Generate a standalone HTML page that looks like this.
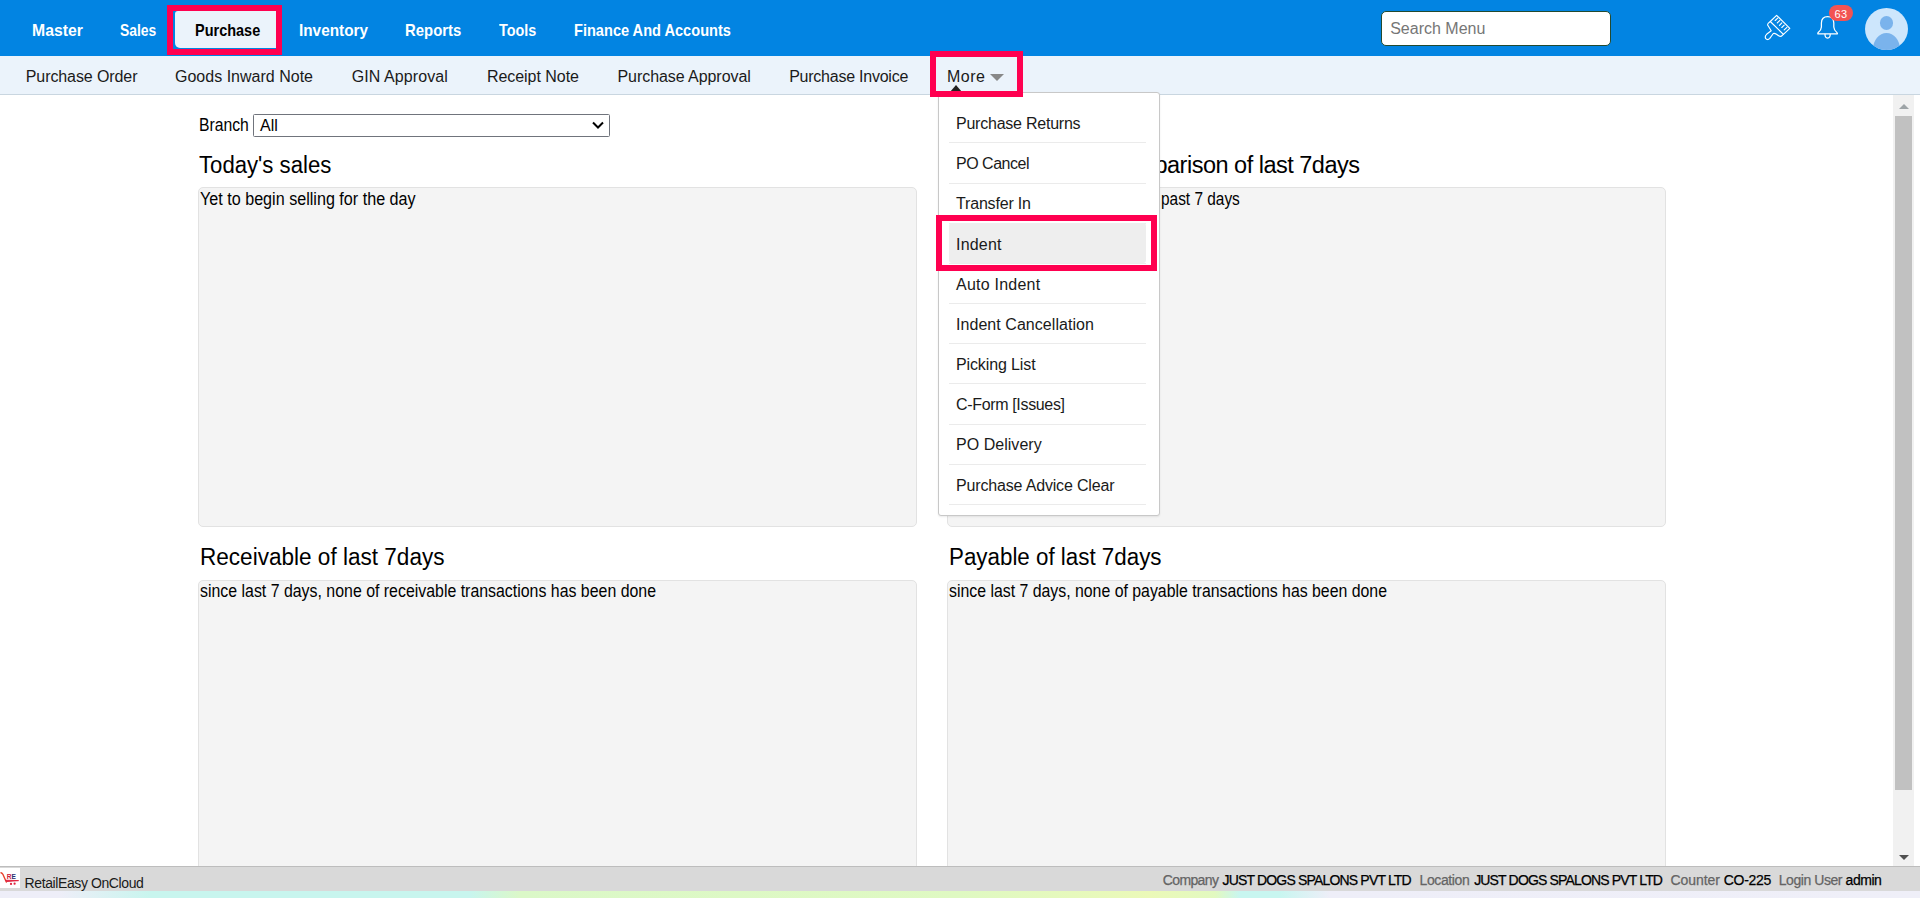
<!DOCTYPE html><html><head><meta charset="utf-8"><style>
*{margin:0;padding:0;box-sizing:border-box}
html,body{width:1920px;height:898px;overflow:hidden;background:#fff;font-family:"Liberation Sans",sans-serif;position:relative}
.t{position:absolute;white-space:nowrap;line-height:1;}
#top{position:absolute;left:0;top:0;width:1920px;height:56px;background:#0284e2}
#tab{position:absolute;left:175px;top:11px;width:107px;height:37px;background:#ebf3fb;border-radius:3px 0 0 5px}
#search{position:absolute;left:1381px;top:11px;width:230px;height:35px;background:#fff;border:1px solid #234a30;border-radius:5px}
#search span{position:absolute;left:8.2px;top:7.8px;font-size:16px;line-height:18px;color:#767676;}
#sub{position:absolute;left:0;top:56px;width:1920px;height:39px;background:#ebf3fb;border-bottom:1px solid #c9d6e0}
#caret{position:absolute;left:990px;top:74px;width:0;height:0;border-left:7px solid transparent;border-right:7px solid transparent;border-top:7px solid #888}
#sel{position:absolute;left:253px;top:114px;width:357px;height:23px;border:1px solid #70747c;border-radius:1.5px;background:#fff}
#chev{position:absolute;left:591px;top:120px}
.box{position:absolute;background:#f4f4f4;border:1px solid #e2e2e2;border-radius:5px}
#dd{position:absolute;left:938px;top:92px;width:222px;height:424px;background:#fff;border:1px solid #c8c8c8;border-radius:3px;box-shadow:0 1px 2px rgba(0,0,0,.08)}
#ddarrow{position:absolute;left:950px;top:85px;width:0;height:0;border-left:6.5px solid transparent;border-right:6.5px solid transparent;border-bottom:7px solid #222}
.sep{position:absolute;left:949px;width:197px;height:1px;background:#ebebeb}
#sel-item{position:absolute;left:949px;top:223px;width:197px;height:40px;background:#eeeeee;border-radius:3px}
.hl{position:absolute;border:6px solid #ff0050}
#track{position:absolute;left:1893px;top:95px;width:21px;height:771px;background:#f1f1f1}
#thumb{position:absolute;left:1895px;top:116px;width:17px;height:674px;background:#c1c1c1}
#up{position:absolute;left:1899px;top:104px;width:0;height:0;border-left:5px solid transparent;border-right:5px solid transparent;border-bottom:5px solid #9ea4a7}
#down{position:absolute;left:1899px;top:855px;width:0;height:0;border-left:5px solid transparent;border-right:5px solid transparent;border-top:5px solid #505050}
#badge{position:absolute;left:1829px;top:5px;width:24px;height:16px;border-radius:8px;background:#f25353;color:#fff;font-size:11px;line-height:11px;text-align:center;letter-spacing:0.4px}
#badge span{position:absolute;left:0;width:24px;top:3.6px}
#avatar{position:absolute;left:1865px;top:8px;width:43px;height:42px;border-radius:50%;background:#cde6fc;overflow:hidden}
#head{position:absolute;left:14.5px;top:8px;width:13.5px;height:13.5px;border-radius:50%;background:#7ab3ec}
#body{position:absolute;left:8px;top:25px;width:27px;height:30px;border-radius:50% 50% 0 0/ 55% 55% 0 0;background:#7ab3ec}
#foot{position:absolute;left:0;top:866px;width:1920px;height:25px;background:#d9d9d9;border-top:1px solid #bdbdbd}
#logo{position:absolute;left:0;top:868px;width:20px;height:20px;background:#fff}
#logo svg{display:block}
#finfo{position:absolute;left:1162px;top:872px;font-size:13px;line-height:15px;white-space:nowrap}
#finfo span{margin-right:5px}
#strip{position:absolute;left:0;top:891px;width:1920px;height:7px;background:linear-gradient(90deg,#eeeef8 0,#eeeef8 60px,#c8f5ee 150px,#c8f5ee 470px,#dbf8c8 520px,#dff9c2 960px,#ebf9b8 1150px,#e2f9c0 1215px,#c8f6f0 1240px,#c8f6f0 1280px,#eeeef8 1330px,#efeff8 1920px)}
</style></head><body>
<div id="top"></div>
<div id="tab"></div>
<div class="t" style="left:31.70px;top:22.00px;font-size:17px;transform:scaleX(0.9269);transform-origin:0 0;color:#fff;font-weight:bold;">Master</div>
<div class="t" style="left:120.40px;top:22.00px;font-size:17px;transform:scaleX(0.8172);transform-origin:0 0;color:#fff;font-weight:bold;">Sales</div>
<div class="t" style="left:298.50px;top:22.00px;font-size:17px;transform:scaleX(0.9018);transform-origin:0 0;color:#fff;font-weight:bold;">Inventory</div>
<div class="t" style="left:405.00px;top:22.00px;font-size:17px;transform:scaleX(0.8758);transform-origin:0 0;color:#fff;font-weight:bold;">Reports</div>
<div class="t" style="left:498.50px;top:22.00px;font-size:17px;transform:scaleX(0.8465);transform-origin:0 0;color:#fff;font-weight:bold;">Tools</div>
<div class="t" style="left:574.00px;top:22.00px;font-size:17px;transform:scaleX(0.8578);transform-origin:0 0;color:#fff;font-weight:bold;">Finance And Accounts</div>
<div class="t" style="left:195.10px;top:22.00px;font-size:17px;transform:scaleX(0.8519);transform-origin:0 0;color:#000;font-weight:bold;">Purchase</div>
<div id="search"><span>Search Menu</span></div>
<svg style="position:absolute;left:1760px;top:10px" width="35" height="35" viewBox="0 0 35 35" fill="none" stroke="#fff" stroke-width="1.15" stroke-linejoin="round" stroke-linecap="round">
<path d="M10.3 11.5 L16.6 5.3 L29.8 18.3 L23.4 24.4 Z"/>
<path d="M15.2 10.5 L17.7 8.2 M17.3 12.9 L19.9 10.3 M19.5 15.4 L21.8 12.9 M21.8 17.5 L24.2 15.2 M24.2 19.9 L26.9 17.3"/>
<path d="M10.3 11.5 Q7.2 13.6 7.6 15 Q9.5 18 11.2 20.8 L6.6 24.3 Q4.6 26.2 5.6 28.4 Q7.4 30.6 9.6 28.6 L13.3 23.5 Q14.6 23 16.5 24.3 Q19.6 26.8 21.3 26.2 L23.4 24.4"/>
</svg>
<svg style="position:absolute;left:1814px;top:14px" width="28" height="28" viewBox="0 0 28 28" fill="none" stroke="#fff" stroke-width="1.25" stroke-linejoin="round">
<path d="M13.6 2.7 Q7.6 2.7 7.4 9 L7.4 13 Q7.3 16 4.2 18.6 Q3.5 19.2 3.9 19.8 L23.3 19.8 Q23.7 19.2 23 18.6 Q19.9 16 19.8 13 L19.8 9 Q19.6 2.7 13.6 2.7 Z"/>
<path d="M11 19.9 Q10.8 24 13.6 24.1 Q16.4 24 16.2 19.9"/>
</svg>
<div id="badge"><span>63</span></div>
<div id="avatar"><div id="head"></div><div id="body"></div></div>
<div id="sub"></div>
<div class="t" style="left:25.80px;top:69.00px;font-size:16px;letter-spacing:-0.096px;color:#1a1a1a;">Purchase Order</div>
<div class="t" style="left:175.00px;top:69.00px;font-size:16px;letter-spacing:0.009px;color:#1a1a1a;">Goods Inward Note</div>
<div class="t" style="left:351.70px;top:69.00px;font-size:16px;letter-spacing:0.086px;color:#1a1a1a;">GIN Approval</div>
<div class="t" style="left:486.90px;top:69.00px;font-size:16px;letter-spacing:-0.036px;color:#1a1a1a;">Receipt Note</div>
<div class="t" style="left:617.50px;top:69.00px;font-size:16px;letter-spacing:-0.063px;color:#1a1a1a;">Purchase Approval</div>
<div class="t" style="left:789.20px;top:69.00px;font-size:16px;letter-spacing:-0.242px;color:#1a1a1a;">Purchase Invoice</div>
<div class="t" style="left:947.00px;top:69.00px;font-size:16px;letter-spacing:0.517px;color:#1a1a1a;">More</div>
<div id="caret"></div>
<div class="t" style="left:199.40px;top:117.00px;font-size:17.5px;transform:scaleX(0.8983);transform-origin:0 0;color:#000;">Branch</div>
<div id="sel"></div>
<div class="t" style="left:260.00px;top:118.00px;font-size:16px;letter-spacing:0.000px;color:#000;">All</div>
<svg id="chev" width="14" height="10" viewBox="0 0 14 10"><path d="M2 2.5 L7 7.5 L12 2.5" fill="none" stroke="#000" stroke-width="2"/></svg>
<div class="box" style="left:198px;top:187px;width:719px;height:340px"></div>
<div class="box" style="left:947px;top:187px;width:719px;height:340px"></div>
<div class="box" style="left:198px;top:580px;width:719px;height:400px"></div>
<div class="box" style="left:947px;top:580px;width:719px;height:400px"></div>
<div class="t" style="left:198.60px;top:154.00px;font-size:23.5px;transform:scaleX(0.9427);transform-origin:0 0;color:#000;">Today's sales</div>
<div class="t" style="left:1049.26px;top:154.00px;font-size:23.5px;letter-spacing:-0.500px;color:#000;">Sales comparison of last 7days</div>
<div class="t" style="left:199.50px;top:546.00px;font-size:23.5px;transform:scaleX(0.9599);transform-origin:0 0;color:#000;">Receivable of last 7days</div>
<div class="t" style="left:948.75px;top:546.00px;font-size:23.5px;transform:scaleX(0.9512);transform-origin:0 0;color:#000;">Payable of last 7days</div>
<div class="t" style="left:200.40px;top:191.00px;font-size:17.5px;transform:scaleX(0.9221);transform-origin:0 0;color:#000;">Yet to begin selling for the day</div>
<div class="t" style="left:972.75px;top:191.00px;font-size:17.5px;letter-spacing:-0.350px;color:#000;">No sales transactions in </div>
<div class="t" style="left:1161.00px;top:191.00px;font-size:17.5px;transform:scaleX(0.8805);transform-origin:0 0;color:#000;">past 7 days</div>
<div class="t" style="left:200.00px;top:583.00px;font-size:17.5px;transform:scaleX(0.9084);transform-origin:0 0;color:#000;">since last 7 days, none of receivable transactions has been done</div>
<div class="t" style="left:948.50px;top:583.00px;font-size:17.5px;transform:scaleX(0.9058);transform-origin:0 0;color:#000;">since last 7 days, none of payable transactions has been done</div>
<div id="dd"></div>
<div id="ddarrow"></div>
<div class="t" style="left:956.00px;top:116.00px;font-size:16px;letter-spacing:-0.231px;color:#1a1a1a;">Purchase Returns</div>
<div class="sep" style="top:142px"></div>
<div class="t" style="left:956.00px;top:156.00px;font-size:16px;letter-spacing:-0.482px;color:#1a1a1a;">PO Cancel</div>
<div class="sep" style="top:183px"></div>
<div class="t" style="left:956.00px;top:196.00px;font-size:16px;letter-spacing:-0.177px;color:#1a1a1a;">Transfer In</div>
<div class="sep" style="top:223px"></div>
<div id="sel-item"></div>
<div class="t" style="left:956.00px;top:237.00px;font-size:16px;letter-spacing:0.204px;color:#1a1a1a;">Indent</div>
<div class="sep" style="top:263px"></div>
<div class="t" style="left:956.00px;top:277.00px;font-size:16px;letter-spacing:0.236px;color:#1a1a1a;">Auto Indent</div>
<div class="sep" style="top:303px"></div>
<div class="t" style="left:956.00px;top:317.00px;font-size:16px;letter-spacing:0.050px;color:#1a1a1a;">Indent Cancellation</div>
<div class="sep" style="top:343px"></div>
<div class="t" style="left:956.00px;top:357.00px;font-size:16px;letter-spacing:-0.121px;color:#1a1a1a;">Picking List</div>
<div class="sep" style="top:383px"></div>
<div class="t" style="left:956.00px;top:397.00px;font-size:16px;letter-spacing:-0.342px;color:#1a1a1a;">C-Form [Issues]</div>
<div class="sep" style="top:424px"></div>
<div class="t" style="left:956.00px;top:437.00px;font-size:16px;letter-spacing:0.034px;color:#1a1a1a;">PO Delivery</div>
<div class="sep" style="top:464px"></div>
<div class="t" style="left:956.00px;top:478.00px;font-size:16px;letter-spacing:-0.168px;color:#1a1a1a;">Purchase Advice Clear</div>
<div class="sep" style="top:504px"></div>
<div class="hl" style="left:167px;top:5px;width:115px;height:50px"></div>
<div class="hl" style="left:930px;top:51px;width:93px;height:46px"></div>
<div class="hl" style="left:936px;top:215px;width:221px;height:56px"></div>
<div id="track"></div><div id="thumb"></div><div id="up"></div><div id="down"></div>
<div id="foot"></div>
<div id="logo"><svg width="20" height="20" viewBox="0 0 20 20"><path d="M1 4.8 Q2.2 5 3 6.5 L6.3 14" fill="none" stroke="#e8402a" stroke-width="1.4" stroke-linecap="round"/><path d="M5.5 12.2 L18.6 12.6 L6.5 13.6 Z" fill="#e0203c" stroke="#e0203c" stroke-width="0.9" stroke-linejoin="round"/><text x="6.8" y="10.8" font-size="6.6" font-weight="bold" fill="#d0203a" font-family="Liberation Sans">R</text><text x="11.6" y="10.8" font-size="6.6" font-weight="bold" fill="#27306e" font-family="Liberation Sans">E</text><circle cx="11" cy="15.9" r="1.1" fill="#e0203c"/><circle cx="14.6" cy="15.7" r="1.1" fill="#e0203c"/></svg></div>
<div class="t" style="left:24.60px;top:876.00px;font-size:14px;letter-spacing:-0.403px;color:#1a1a1a;">RetailEasy OnCloud</div>
<div class="t" style="left:1162.70px;top:873.00px;font-size:14px;letter-spacing:-0.603px;color:#646464;-webkit-text-stroke:0.25px #646464;">Company</div>
<div class="t" style="left:1222.50px;top:873.00px;font-size:14px;letter-spacing:-0.826px;color:#000;-webkit-text-stroke:0.25px #000;">JUST DOGS SPALONS PVT LTD</div>
<div class="t" style="left:1419.50px;top:873.00px;font-size:14px;letter-spacing:-0.376px;color:#646464;-webkit-text-stroke:0.25px #646464;">Location</div>
<div class="t" style="left:1474.20px;top:873.00px;font-size:14px;letter-spacing:-0.843px;color:#000;-webkit-text-stroke:0.25px #000;">JUST DOGS SPALONS PVT LTD</div>
<div class="t" style="left:1670.50px;top:873.00px;font-size:14px;letter-spacing:-0.052px;color:#646464;-webkit-text-stroke:0.25px #646464;">Counter</div>
<div class="t" style="left:1723.75px;top:873.00px;font-size:14px;letter-spacing:-0.303px;color:#000;-webkit-text-stroke:0.25px #000;">CO-225</div>
<div class="t" style="left:1778.75px;top:873.00px;font-size:14px;letter-spacing:-0.439px;color:#646464;-webkit-text-stroke:0.25px #646464;">Login User</div>
<div class="t" style="left:1845.60px;top:873.00px;font-size:14px;letter-spacing:-0.459px;color:#000;-webkit-text-stroke:0.25px #000;">admin</div>
<div id="strip"></div>
</body></html>
